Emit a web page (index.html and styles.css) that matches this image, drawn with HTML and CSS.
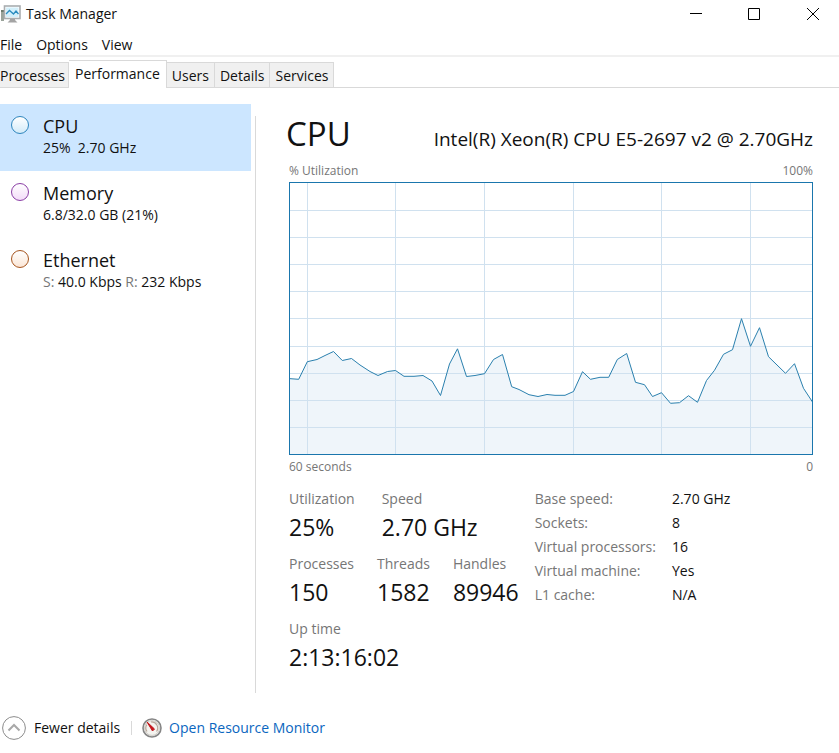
FILE: index.html
```html
<!DOCTYPE html>
<html lang="en">
<head>
    <meta charset="UTF-8">
    <meta name="viewport" content="width=device-width, initial-scale=1.0">
    <title>Task Manager</title>
    <link rel="stylesheet" href="styles.css">
</head>
<body>
    <header class="title-bar">
        <svg class="app-icon" width="21" height="18" viewBox="0 0 21 18">
            <rect x="1" y="6" width="3" height="10" fill="#9aa39a"/>
            <rect x="1" y="5" width="3" height="2" fill="#6d7a6d"/>
            <rect x="4.500" y="1" width="15.500" height="12.500" fill="#fff" stroke="#a9adb0" stroke-width="1.600"/>
            <rect x="6" y="2.500" width="12.500" height="9.500" fill="#d3f0fb"/>
            <path d="M6 9 L9.500 5.500 L13.500 9 L16 6 L18.500 9" fill="none" stroke="#2b8cbf" stroke-width="1.300"/>
            <path d="M10 14 H15 V15 L17.500 17.500 H7.500 L10 15 Z" fill="#a4a4a4"/>
        </svg>
        <h1>Task Manager</h1>
        <div class="window-buttons">
            <button aria-label="Minimize"><svg width="12" height="12" viewBox="0 0 12 12"><path d="M0 5.500 H12"/></svg></button>
            <button aria-label="Maximize"><svg width="12" height="12" viewBox="0 0 12 12"><path d="M.5 .5 H11.500 V11.500 H.5 Z"/></svg></button>
            <button aria-label="Close"><svg width="12" height="12" viewBox="0 0 12 12"><path d="M0 0 L12 12 M12 0 L0 12"/></svg></button>
        </div>
    </header>
    <nav class="menu-bar">
        <button>File</button>
        <button>Options</button>
        <button>View</button>
    </nav>
    <div class="tabs" role="tablist">
        <button role="tab">Processes</button>
        <button role="tab" class="active" aria-selected="true">Performance</button>
        <button role="tab">Users</button>
        <button role="tab">Details</button>
        <button role="tab">Services</button>
    </div>
    <main class="content">
        <aside class="sidebar">
            <button class="resource selected">
                <span class="ring cpu"></span>
                <span class="resource-text">
                    <span class="resource-name">CPU</span>
                    <span class="resource-info">25%&nbsp; 2.70 GHz</span>
                </span>
            </button>
            <button class="resource">
                <span class="ring memory"></span>
                <span class="resource-text">
                    <span class="resource-name">Memory</span>
                    <span class="resource-info">6.8/32.0 GB (21%)</span>
                </span>
            </button>
            <button class="resource">
                <span class="ring ethernet"></span>
                <span class="resource-text">
                    <span class="resource-name">Ethernet</span>
                    <span class="resource-info"><i>S:</i> 40.0 Kbps <i>R:</i> 232 Kbps</span>
                </span>
            </button>
        </aside>
        <section class="panel">
            <div class="panel-header">
                <h2>CPU</h2>
                <p>Intel(R) Xeon(R) CPU E5-2697 v2 @ 2.70GHz</p>
            </div>
            <div class="chart-labels"><span>% Utilization</span><span>100%</span></div>
            <svg class="chart" viewBox="0 0 524 273" role="img" aria-label="CPU utilization">
                <path class="area" d="M0 196.600 L9.700 197.300 L18.300 179.700 L28 177.500 L36 173.500 L44.500 169.500 L53.300 178.500 L62.500 176.500 L71 183 L81 189.500 L89 193.500 L98.500 189.500 L106.500 188.500 L115 194.300 L125 194.300 L134 193.500 L143 199 L151.500 213.500 L160.500 182 L168.500 166.800 L177.500 194.500 L186 193.500 L195.500 191.700 L204.500 177.500 L213.500 172.500 L222.700 204.700 L230 207.500 L240 212.700 L249 214.500 L258 212.500 L266 213.300 L276 213.300 L284.500 209.500 L293.500 189.700 L301.500 197.300 L311 195.300 L319.700 195.300 L328.300 177.500 L337.700 171.500 L346.500 200.300 L355.500 202.700 L363.500 214.500 L372.500 210.700 L381.500 221.300 L390.500 220.700 L399.500 213.700 L408.500 220.300 L417.500 198.500 L425.500 188.300 L434.500 172.300 L443.500 167.700 L452.500 136.700 L461.500 164.300 L470.500 145.700 L479.500 174.700 L496.500 191.300 L505.500 181.700 L514.500 206.300 L523.500 220 V272.500 H0 Z"/>
                <path class="grid" d="M18.500 0 V273 M106.500 0 V273 M195.500 0 V273 M284.500 0 V273 M372.500 0 V273 M461.500 0 V273 M0 28.500 H524 M0 55.500 H524 M0 82.500 H524 M0 109.500 H524 M0 136.500 H524 M0 164.500 H524 M0 191.500 H524 M0 218.500 H524 M0 245.500 H524"/>
                <path class="line" d="M0 196.600 L9.700 197.300 L18.300 179.700 L28 177.500 L36 173.500 L44.500 169.500 L53.300 178.500 L62.500 176.500 L71 183 L81 189.500 L89 193.500 L98.500 189.500 L106.500 188.500 L115 194.300 L125 194.300 L134 193.500 L143 199 L151.500 213.500 L160.500 182 L168.500 166.800 L177.500 194.500 L186 193.500 L195.500 191.700 L204.500 177.500 L213.500 172.500 L222.700 204.700 L230 207.500 L240 212.700 L249 214.500 L258 212.500 L266 213.300 L276 213.300 L284.500 209.500 L293.500 189.700 L301.500 197.300 L311 195.300 L319.700 195.300 L328.300 177.500 L337.700 171.500 L346.500 200.300 L355.500 202.700 L363.500 214.500 L372.500 210.700 L381.500 221.300 L390.500 220.700 L399.500 213.700 L408.500 220.300 L417.500 198.500 L425.500 188.300 L434.500 172.300 L443.500 167.700 L452.500 136.700 L461.500 164.300 L470.500 145.700 L479.500 174.700 L496.500 191.300 L505.500 181.700 L514.500 206.300 L523.500 220"/>
                <rect class="frame" x=".5" y=".5" width="523" height="272"/>
            </svg>
            <div class="chart-labels"><span>60 seconds</span><span>0</span></div>
            <div class="details">
                <div class="stats">
                    <dl class="stat-row wide">
                        <div><dt>Utilization</dt><dd>25%</dd></div>
                        <div><dt>Speed</dt><dd>2.70 GHz</dd></div>
                    </dl>
                    <dl class="stat-row">
                        <div><dt>Processes</dt><dd>150</dd></div>
                        <div><dt>Threads</dt><dd>1582</dd></div>
                        <div><dt>Handles</dt><dd>89946</dd></div>
                    </dl>
                    <dl class="stat-row">
                        <div><dt>Up time</dt><dd>2:13:16:02</dd></div>
                    </dl>
                </div>
                <table class="specs">
                    <tr><th scope="row">Base speed:</th><td>2.70 GHz</td></tr>
                    <tr><th scope="row">Sockets:</th><td>8</td></tr>
                    <tr><th scope="row">Virtual processors:</th><td>16</td></tr>
                    <tr><th scope="row">Virtual machine:</th><td>Yes</td></tr>
                    <tr><th scope="row">L1 cache:</th><td>N/A</td></tr>
                </table>
            </div>
        </section>
    </main>
    <footer class="footer">
        <button class="fewer">
            <svg width="24" height="24" viewBox="0 0 24 24" fill="none">
                <circle cx="12" cy="12" r="11.400" stroke="#8c8c8c"/>
                <path d="M6.500 14.500 L12 9 L17.500 14.500" stroke="#a8a8a8" stroke-width="2"/>
            </svg>
            Fewer details
        </button>
        <span class="divider"></span>
        <a class="monitor-link" href="#">
            <svg width="20" height="20" viewBox="0 0 20 20" fill="none">
                <circle cx="10" cy="10" r="9" fill="#f4f3ef" stroke="#858585" stroke-width="1.600"/>
                <circle cx="10" cy="10" r="7.400" stroke="#d0cdc8"/>
                <path d="M5 13.500 A6 6 0 0 1 5 6.500 M9 4 A6 6 0 0 1 14.500 13.500" stroke="#b9a89c" stroke-width="1.200"/>
                <path d="M5 4 L12.500 11 L10.500 13 Z" fill="#c4161c" stroke="#c4161c"/>
            </svg>
            Open Resource Monitor
        </a>
    </footer>
</body>
</html>
```

FILE: styles.css
```css
* {
    box-sizing: border-box;
}
body {
    font-family: 'Segoe UI', 'Open Sans', 'Noto Sans', sans-serif;
    font-size: 14px;
    line-height: 20px;
    margin: 0;
    min-height: 100vh;
    display: flex;
    flex-direction: column;
    background-color: #fff;
    color: #111;
}
h1, h2, p, dl, dd {
    margin: 0;
    font-weight: normal;
}
button {
    font: inherit;
    color: inherit;
    background: none;
    border: none;
    padding: 0;
    cursor: pointer;
}
.title-bar {
    display: flex;
    align-items: center;
    height: 28px;
}
.app-icon {
    margin-right: 5px;
}
.title-bar h1 {
    font-size: 14px;
}
.window-buttons {
    display: flex;
    margin-left: auto;
}
.window-buttons button {
    display: flex;
    justify-content: center;
    align-items: center;
    width: 58px;
    height: 26px;
}
.window-buttons button:last-child {
    width: 56px;
    padding-left: 4px;
}
.window-buttons path {
    fill: none;
    stroke: #000;
}
.menu-bar {
    display: flex;
    gap: 14px;
    height: 29px;
    padding-top: 7px;
    align-items: flex-start;
    border-bottom: 2px solid #f0f0f0;
}
.tabs {
    display: flex;
    align-items: flex-end;
    height: 31px;
    border-bottom: 1px solid #d9d9d9;
}
.tabs button {
    height: 25px;
    padding: 2px 5px 0;
    background-color: #f0f0f0;
    border: 1px solid #d9d9d9;
    border-left: none;
    border-bottom: none;
}
.tabs button:first-child {
    padding-left: 0;
    padding-right: 3px;
}
.tabs .active {
    height: 28px;
    margin-bottom: -1px;
    padding: 0 6px 2px;
    background-color: #fff;
}
.content {
    display: flex;
    flex: 1;
}
.sidebar {
    flex: 0 0 251px;
    padding-top: 16px;
}
.resource {
    display: flex;
    align-items: flex-start;
    gap: 14px;
    width: 100%;
    height: 67px;
    padding: 12px 11px;
    text-align: left;
}
.resource.selected {
    background-color: #cce6ff;
}
.ring {
    width: 18px;
    height: 18px;
    border-radius: 50%;
    border: 1px solid;
}
.ring.cpu {
    border-color: #2f86bd;
    background: linear-gradient(#fff, #d3ebf9);
}
.ring.memory {
    border-color: #8b3fa6;
    background: linear-gradient(#fff, #f3dcf9);
}
.ring.ethernet {
    border-color: #a7561f;
    background: linear-gradient(#fff, #fbe6d6);
}
.resource-name, .resource-info {
    display: block;
}
.resource-name {
    font-size: 18px;
}
.resource-info {
    line-height: 24px;
}
.resource-info i {
    font-style: normal;
    color: #767676;
}
.panel {
    flex: 1;
    min-width: 0;
    margin: 28px 0 10px 4px;
    padding: 0 26px 0 33px;
    border-left: 1px solid #d9d9d9;
}
.panel-header {
    display: flex;
    justify-content: space-between;
    align-items: baseline;
    padding-bottom: 2px;
    line-height: 36px;
}
.panel-header h2 {
    font-size: 33px;
    margin-left: -3px;
}
.panel-header p {
    font-size: 19px;
}
.chart-labels {
    display: flex;
    justify-content: space-between;
    font-size: 12px;
    line-height: 23px;
    color: #767676;
}
.chart {
    display: block;
    width: 100%;
}
.chart .area {
    fill: #eff5fa;
}
.chart .grid {
    fill: none;
    stroke: #d0e1ef;
}
.chart .line {
    fill: none;
    stroke: #2a80ae;
}
.chart .frame {
    fill: none;
    stroke: #1a76ad;
}
.details {
    display: flex;
    gap: 16px;
    margin-top: 9px;
}
.stats {
    display: flex;
    flex-direction: column;
    gap: 9px;
}
.stat-row {
    display: flex;
    gap: 23px;
}
.stat-row.wide {
    gap: 27px;
}
.stat-row dt, .specs {
    line-height: 24px;
}
.stat-row dt, .specs th {
    font-weight: normal;
    color: #767676;
}
.stat-row dd {
    font-size: 23px;
    line-height: 32px;
}
.specs {
    align-self: flex-start;
    border-collapse: collapse;
    text-align: left;
}
.specs th, .specs td {
    padding: 0;
}
.specs th {
    padding-right: 16px;
}
.footer {
    display: flex;
    align-items: center;
    height: 50px;
    padding-left: 2px;
}
.fewer, .monitor-link {
    display: flex;
    align-items: center;
    gap: 8px;
}
.divider {
    width: 1px;
    height: 14px;
    margin: 0 10px 0 11px;
    background-color: #d9d9d9;
}
.monitor-link {
    gap: 7px;
    color: #0a66c0;
    text-decoration: none;
}
```
